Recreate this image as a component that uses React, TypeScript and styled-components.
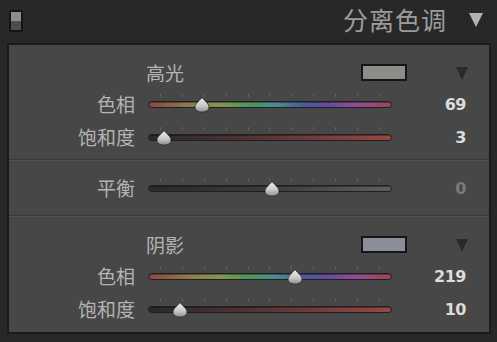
import React, { ReactElement } from 'react';
import styled, { createGlobalStyle } from 'styled-components';

const GlobalStyle = createGlobalStyle`
  html, body {
    margin: 0;
    padding: 0;
    background: #282828;
  }
  body {
    width: 497px;
    height: 342px;
    overflow: hidden;
    font-family: "Noto Sans CJK SC", "Noto Sans", sans-serif;
  }
`;

const Window = styled.div`
  width: 497px;
  height: 342px;
  background: #282828;
  display: flex;
  flex-direction: column;
`;

const Header = styled.div`
  height: 43px;
  display: flex;
  align-items: center;
  padding: 0 14px 0 9px;
  box-sizing: border-box;
`;

const ToggleIcon = styled.div`
  width: 14px;
  height: 22px;
  box-sizing: border-box;
  border: 2px solid #151515;
  border-radius: 2px;
  display: flex;
  flex-direction: column;
  margin-top: -2px;
`;

const ToggleHalf = styled.div<{ tone: string }>`
  flex: 1;
  background: ${(p) => p.tone};
`;

const Title = styled.div`
  margin-left: auto;
  font-size: 25px;
  color: #9c9c9c;
  letter-spacing: 1px;
  line-height: 1;
  margin-top: -4px;
`;

const Triangle = styled.div<{ color: string; size: number }>`
  width: 0;
  height: 0;
  border-left: ${(p) => p.size / 2}px solid transparent;
  border-right: ${(p) => p.size / 2}px solid transparent;
  border-top: ${(p) => p.size}px solid ${(p) => p.color};
`;

const TitleArrow = styled.div`
  margin-left: 22px;
  margin-top: -4px;
`;

const Panel = styled.div`
  margin-left: 7px;
  width: 484px;
  height: 291px;
  box-sizing: border-box;
  border: 2px solid #1b1b1b;
  background: #474747;
  display: flex;
  flex-direction: column;
`;

const Section = styled.div<{ pad: number; last?: boolean }>`
  padding: ${(p) => p.pad}px 0 0;
  border-bottom: ${(p) => (p.last ? 'none' : '1px solid #383838')};
  box-shadow: ${(p) => (p.last ? 'none' : '0 1px 0 #525252')};
  margin-bottom: ${(p) => (p.last ? 0 : 1)}px;
  flex: ${(p) => (p.last ? 1 : 'none')};
`;

const GroupHead = styled.div`
  height: 22px;
  display: grid;
  grid-template-columns: 137px 215px 50px 57px;
  align-items: center;
  margin-bottom: 5px;
`;

const GroupName = styled.div`
  grid-column: 2;
  font-size: 19px;
  color: #b4b4b4;
  line-height: 1;
`;

const Swatch = styled.div<{ fill: string }>`
  width: 46px;
  height: 17px;
  box-sizing: border-box;
  border: 2px solid #161616;
  background: ${(p) => p.fill};
  grid-column: 3;
  justify-self: start;
`;

const HeadArrow = styled.div`
  grid-column: 4;
  justify-self: end;
  margin-top: 2px;
`;

const Row = styled.div`
  height: 33px;
  display: grid;
  grid-template-columns: 126px 244px 61px;
  column-gap: 13px;
  align-items: center;
`;

const Label = styled.div`
  text-align: right;
  font-size: 19px;
  color: #b4b4b4;
  line-height: 1;
  margin-top: -2px;
`;

const TrackWrap = styled.div`
  position: relative;
  height: 14px;
  display: flex;
  align-items: center;
`;

const Ticks = styled.div`
  position: absolute;
  left: 12px;
  right: 12px;
  top: -4px;
  display: flex;
  justify-content: space-between;
`;

const Tick = styled.div`
  width: 1px;
  height: 3px;
  background: #656565;
`;

const Track = styled.div<{ kind: 'hue' | 'sat' | 'bal' }>`
  width: 100%;
  height: 7px;
  box-sizing: border-box;
  border: 1px solid #202020;
  border-radius: 4px;
  background: ${(p) =>
    p.kind === 'hue'
      ? 'linear-gradient(to right, #8e4646 0%, #8e7e4c 18%, #7e984c 30%, #4c9460 42%, #4a8e8e 52%, #4a5a98 64%, #644c98 74%, #944c94 86%, #9a484e 100%)'
      : p.kind === 'sat'
      ? 'linear-gradient(to right, #2a2a2a 0%, #4e3232 40%, #984646 100%)'
      : 'linear-gradient(to right, #2a2a2a 0%, #3c3c3c 50%, #5e5e5e 100%)'};
  box-shadow: inset 0 1px 0 rgba(0, 0, 0, 0.35);
`;

const Thumb = styled.svg`
  position: absolute;
  top: -2px;
  margin-left: -8px;
`;

const Value = styled.div<{ dim?: boolean }>`
  text-align: right;
  font-family: "DejaVu Sans", "Liberation Sans", sans-serif;
  font-weight: bold;
  font-size: 16px;
  color: ${(p) => (p.dim ? '#7a7a7a' : '#dcdcdc')};
  letter-spacing: -0.5px;
  margin-top: -1px;
`;

type Kind = 'hue' | 'sat' | 'bal';

const Slider = ({ label, kind, value, at, dim }: { label: string; kind: Kind; value: number; at: number; dim?: boolean }): ReactElement => (
  <Row>
    <Label>{label}</Label>
    <TrackWrap>
      <Ticks>
        {Array.from({ length: 11 }).map((_, i) => (
          <Tick key={i} />
        ))}
      </Ticks>
      <Track kind={kind} />
      <Thumb width="16" height="17" viewBox="0 0 16 17" style={{ left: at }}>
        <defs>
          <linearGradient id="thumbFill" x1="0" y1="0" x2="0" y2="1">
            <stop offset="0" stopColor="#f0f0f0" />
            <stop offset="0.6" stopColor="#c8c8c8" />
            <stop offset="1" stopColor="#8c8c8c" />
          </linearGradient>
        </defs>
        <path
          d="M8 1 C9 4 15 7 15 11 C15 14.5 12 16 8 16 C4 16 1 14.5 1 11 C1 7 7 4 8 1 Z"
          fill="url(#thumbFill)"
          stroke="#2a2a2a"
          strokeWidth="0.8"
        />
      </Thumb>
    </TrackWrap>
    <Value dim={dim}>{value}</Value>
  </Row>
);

const Group = ({ name, fill, hue, hueAt, sat, satAt }: { name: string; fill: string; hue: number; hueAt: number; sat: number; satAt: number }): ReactElement => (
  <>
    <GroupHead>
      <GroupName>{name}</GroupName>
      <Swatch fill={fill} />
      <HeadArrow>
        <Triangle color="#2a2a2a" size={13} />
      </HeadArrow>
    </GroupHead>
    <Slider label="色相" kind="hue" value={hue} at={hueAt} />
    <Slider label="饱和度" kind="sat" value={sat} at={satAt} />
  </>
);

const App = (): ReactElement => (
  <Window>
    <GlobalStyle />
    <Header>
      <ToggleIcon>
        <ToggleHalf tone="#8e8e8e" />
        <ToggleHalf tone="#4e4e4e" />
      </ToggleIcon>
      <Title>分离色调</Title>
      <TitleArrow>
        <Triangle color="#b2b2b2" size={14} />
      </TitleArrow>
    </Header>
    <Panel>
      <Section pad={16}>
        <Group name="高光" fill="#8c8c89" hue={69} hueAt={54} sat={3} satAt={16} />
        <div style={{ height: 5 }} />
      </Section>
      <Section pad={11}>
        <Slider label="平衡" kind="bal" value={0} at={124} dim />
        <div style={{ height: 10 }} />
      </Section>
      <Section pad={16} last>
        <Group name="阴影" fill="#8a8e9a" hue={219} hueAt={147} sat={10} satAt={32} />
      </Section>
    </Panel>
  </Window>
);

export default App;
